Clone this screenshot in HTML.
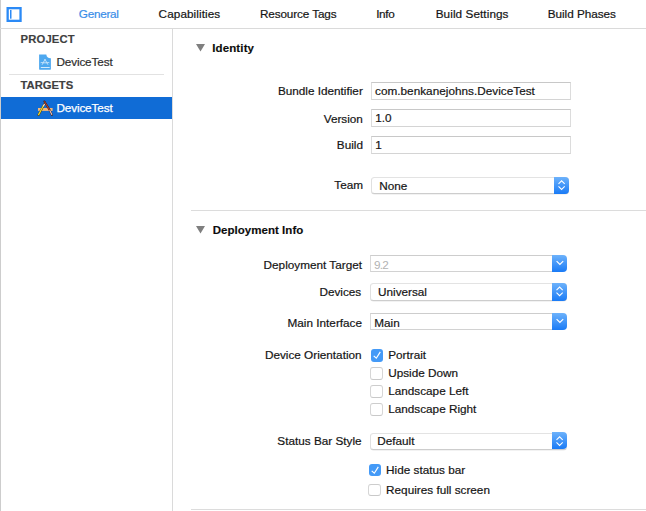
<!DOCTYPE html>
<html><head><meta charset="utf-8"><style>
html,body{margin:0;padding:0;width:646px;height:511px;overflow:hidden;background:#fff;position:relative;font-family:"Liberation Sans",sans-serif;}
.t{position:absolute;font-size:11.75px;line-height:16px;white-space:nowrap;-webkit-text-stroke:0.2px currentColor;}
</style></head><body>
<div style="position:absolute;left:0px;top:0px;width:1px;height:511px;background:#cdcdcd"></div>
<div style="position:absolute;left:0px;top:28px;width:646px;height:1px;background:#dadada"></div>
<div style="position:absolute;left:172px;top:28px;width:1px;height:483px;background:#dadada"></div>
<svg style="position:absolute;left:0;top:0" width="28" height="28" viewBox="0 0 28 28"><rect x="7.65" y="8.15" width="12.9" height="12.7" fill="none" stroke="#2b8af6" stroke-width="2.3"/><rect x="10" y="10" width="1.5" height="8.7" fill="#2b8af6"/></svg>
<div class="t" style="left:78.80px;top:6.33px;color:#3a8ee8;letter-spacing:-0.283px;">General</div>
<div class="t" style="left:158.60px;top:6.33px;color:#151515;letter-spacing:0.078px;">Capabilities</div>
<div class="t" style="left:259.90px;top:6.33px;color:#151515;letter-spacing:-0.122px;">Resource Tags</div>
<div class="t" style="left:376.20px;top:6.33px;color:#151515;letter-spacing:-0.333px;">Info</div>
<div class="t" style="left:435.70px;top:6.33px;color:#151515;letter-spacing:0.073px;">Build Settings</div>
<div class="t" style="left:547.70px;top:6.33px;color:#151515;letter-spacing:-0.025px;">Build Phases</div>
<div class="t" style="left:20.60px;top:31.00px;font-size:11.25px;color:#404040;font-weight:bold;letter-spacing:0.143px;-webkit-text-stroke:0.15px currentColor;">PROJECT</div>
<div class="t" style="left:56.40px;top:53.63px;color:#2e2e2e;letter-spacing:-0.13px;">DeviceTest</div>
<div style="position:absolute;left:9px;top:73.5px;width:155px;height:1px;background:#e2e2e2"></div>
<div class="t" style="left:20.60px;top:77.20px;font-size:11.25px;color:#404040;font-weight:bold;letter-spacing:-0.053px;-webkit-text-stroke:0.15px currentColor;">TARGETS</div>
<div style="position:absolute;left:1px;top:97.3px;width:171px;height:21.9px;background:#106cd6"></div>
<div class="t" style="left:56.40px;top:100.33px;color:#ffffff;letter-spacing:-0.13px;-webkit-text-stroke:0.25px currentColor;">DeviceTest</div>
<svg style="position:absolute;left:34px;top:50px" width="24" height="24" viewBox="0 0 24 24">
<path d="M5.1 4.5 H12.3 A4.4 4.4 0 0 0 16.9 8.3 V19.1 Q16.9 19.7 16.3 19.7 H5.7 Q5.1 19.7 5.1 19.1 Z" fill="#4ea8ef"/>
<path d="M11 9.4 L8.3 14.4 M11 9.4 L13.8 14.4 M7 12.6 Q8 12.2 9 12.8 H13 Q14 12.2 15 12.6" stroke="#cde6fb" stroke-width="0.9" fill="none" stroke-linecap="round"/>
<rect x="6.8" y="17.1" width="8.9" height="0.9" fill="#e3f2fd"/>
</svg>
<svg style="position:absolute;left:36px;top:99px" width="20" height="20" viewBox="0 0 20 20">
<rect x="2" y="9" width="14.6" height="2.9" fill="#f2b77a"/>
<path d="M2.5 15.9 L8.4 5.1" stroke="#4a3a10" stroke-width="2.1" stroke-linecap="round"/>
<path d="M2.6 15.6 L7.4 6.8" stroke="#ecd42e" stroke-width="1.3" stroke-linecap="round"/>
<path d="M7.4 6.8 L8.5 5.2" stroke="#f0e0e0" stroke-width="1.3" stroke-linecap="round"/>
<path d="M8.4 2.4 L13.9 11.4 L15.9 15.9" stroke="#3a1a10" stroke-width="1.9" stroke-linecap="round" fill="none"/>
<path d="M8.6 2.8 L13.8 11.4" stroke="#b0402a" stroke-width="1.1" stroke-linecap="round"/>
<path d="M13.9 11.6 L15.8 15.6" stroke="#ecc8c0" stroke-width="1.1" stroke-linecap="round"/>
</svg>
<svg style="position:absolute;left:196px;top:44px" width="9" height="8" viewBox="0 0 9 8"><path d="M0 0 H9 L4.5 7.5 Z" fill="#7f7f7f"/></svg>
<div class="t" style="left:212.20px;top:40.41px;font-size:11.5px;color:#0d0d0d;font-weight:bold;letter-spacing:0.13px;-webkit-text-stroke:0.15px currentColor;">Identity</div>
<div style="position:absolute;left:191px;top:210px;width:455px;height:1px;background:#dcdcdc"></div>
<svg style="position:absolute;left:196px;top:226px" width="9" height="8" viewBox="0 0 9 8"><path d="M0 0 H9 L4.5 7.5 Z" fill="#7f7f7f"/></svg>
<div class="t" style="left:212.70px;top:221.81px;font-size:11.5px;color:#0d0d0d;font-weight:bold;letter-spacing:0.036px;-webkit-text-stroke:0.15px currentColor;">Deployment Info</div>
<div style="position:absolute;left:191px;top:509px;width:455px;height:1px;background:#dcdcdc"></div>
<div class="t" style="left:277.88px;top:83.03px;color:#151515;">Bundle Identifier</div>
<div class="t" style="left:323.71px;top:110.53px;color:#151515;">Version</div>
<div class="t" style="left:336.87px;top:137.33px;color:#151515;">Build</div>
<div class="t" style="left:334.27px;top:177.43px;color:#151515;">Team</div>
<div class="t" style="left:263.59px;top:257.03px;color:#151515;">Deployment Target</div>
<div class="t" style="left:319.41px;top:284.03px;color:#151515;">Devices</div>
<div class="t" style="left:287.55px;top:314.93px;color:#151515;">Main Interface</div>
<div class="t" style="left:264.94px;top:347.33px;color:#151515;">Device Orientation</div>
<div class="t" style="left:277.35px;top:433.23px;color:#151515;">Status Bar Style</div>
<div style="position:absolute;left:371px;top:82px;width:200px;height:18px;box-sizing:border-box;background:#fff;border:1px solid #dcdcdc;border-top-color:#c8c8c8;border-bottom-color:#d4d4d4;"></div>
<div class="t" style="left:375.00px;top:83.13px;color:#151515;letter-spacing:0.02px;">com.benkanejohns.DeviceTest</div>
<div style="position:absolute;left:371px;top:109px;width:200px;height:18px;box-sizing:border-box;background:#fff;border:1px solid #dcdcdc;border-top-color:#c8c8c8;border-bottom-color:#d4d4d4;"></div>
<div class="t" style="left:375.20px;top:110.33px;color:#151515;">1.0</div>
<div style="position:absolute;left:371px;top:136px;width:200px;height:18px;box-sizing:border-box;background:#fff;border:1px solid #dcdcdc;border-top-color:#c8c8c8;border-bottom-color:#d4d4d4;"></div>
<div class="t" style="left:375.20px;top:137.33px;color:#151515;">1</div>
<div style="position:absolute;left:371px;top:177.2px;width:198.4px;height:17px;box-sizing:border-box;background:#fff;border:1px solid #e0e0e0;border-top-color:#e3e3e3;border-bottom-color:#cdcdcd;border-radius:3.5px;box-shadow:0 0.5px 0.6px rgba(0,0,0,0.10);"></div>
<div style="position:absolute;left:554.3px;top:176.79999999999998px;width:15.1px;height:17.2px;background:linear-gradient(#6db2fb,#1a7bf6);border-radius:0 4px 4px 0;"></div>
<svg style="position:absolute;left:554.3px;top:177.2px;overflow:visible" width="15" height="17" viewBox="0 0 15 17"><path d="M4.5 6.80 L7.6 3.80 L10.7 6.80 M4.5 9.40 L7.6 12.40 L10.7 9.40" stroke="#fff" stroke-width="1.05" fill="none"/></svg>
<div class="t" style="left:379.30px;top:177.73px;color:#151515;">None</div>
<div style="position:absolute;left:370.3px;top:255.2px;width:185px;height:16.5px;box-sizing:border-box;background:#fff;border:1px solid #dadada;border-right:none;border-top-color:#cdcdcd;border-bottom-color:#d2d2d2;"></div>
<div style="position:absolute;left:551.5999999999999px;top:255.2px;width:15.7px;height:16.5px;background:linear-gradient(#6db2fb,#1a7bf6);border-radius:0 4px 4px 0;"></div>
<svg style="position:absolute;left:551.5999999999999px;top:255.2px;overflow:visible" width="16" height="16.5" viewBox="0 0 16 16.5"><path d="M4.6 6.05 L7.9 9.45 L11.2 6.05" stroke="#fff" stroke-width="1.2" fill="none"/></svg>
<div class="t" style="left:373.90px;top:256.83px;color:#b3b3b3;letter-spacing:-0.665px;-webkit-text-stroke:0px currentColor;">9.2</div>
<div style="position:absolute;left:370.2px;top:283.3px;width:196.8px;height:17.5px;box-sizing:border-box;background:#fff;border:1px solid #e0e0e0;border-top-color:#e3e3e3;border-bottom-color:#cdcdcd;border-radius:3.5px;box-shadow:0 0.5px 0.6px rgba(0,0,0,0.10);"></div>
<div style="position:absolute;left:551.9px;top:282.90000000000003px;width:15.1px;height:17.7px;background:linear-gradient(#6db2fb,#1a7bf6);border-radius:0 4px 4px 0;"></div>
<svg style="position:absolute;left:551.9px;top:283.3px;overflow:visible" width="15" height="17.5" viewBox="0 0 15 17.5"><path d="M4.5 7.05 L7.6 4.05 L10.7 7.05 M4.5 9.65 L7.6 12.65 L10.7 9.65" stroke="#fff" stroke-width="1.05" fill="none"/></svg>
<div class="t" style="left:378.00px;top:283.93px;color:#151515;">Universal</div>
<div style="position:absolute;left:370.3px;top:313.3px;width:185px;height:16.5px;box-sizing:border-box;background:#fff;border:1px solid #dadada;border-right:none;border-top-color:#cdcdcd;border-bottom-color:#d2d2d2;"></div>
<div style="position:absolute;left:551.5999999999999px;top:313.3px;width:15.7px;height:16.5px;background:linear-gradient(#6db2fb,#1a7bf6);border-radius:0 4px 4px 0;"></div>
<svg style="position:absolute;left:551.5999999999999px;top:313.3px;overflow:visible" width="16" height="16.5" viewBox="0 0 16 16.5"><path d="M4.6 6.05 L7.9 9.45 L11.2 6.05" stroke="#fff" stroke-width="1.2" fill="none"/></svg>
<div class="t" style="left:374.30px;top:314.83px;color:#151515;">Main</div>
<div style="position:absolute;left:369.6px;top:432.6px;width:197.7px;height:17px;box-sizing:border-box;background:#fff;border:1px solid #e0e0e0;border-top-color:#e3e3e3;border-bottom-color:#cdcdcd;border-radius:3.5px;box-shadow:0 0.5px 0.6px rgba(0,0,0,0.10);"></div>
<div style="position:absolute;left:552.1999999999999px;top:432.20000000000005px;width:15.1px;height:17.2px;background:linear-gradient(#6db2fb,#1a7bf6);border-radius:0 4px 4px 0;"></div>
<svg style="position:absolute;left:552.1999999999999px;top:432.6px;overflow:visible" width="15" height="17" viewBox="0 0 15 17"><path d="M4.5 6.80 L7.6 3.80 L10.7 6.80 M4.5 9.40 L7.6 12.40 L10.7 9.40" stroke="#fff" stroke-width="1.05" fill="none"/></svg>
<div class="t" style="left:377.20px;top:433.23px;color:#151515;">Default</div>
<div style="position:absolute;left:370.5px;top:349.4px;width:12.5px;height:12.5px;box-sizing:border-box;background:#449af7;border-radius:3px;"></div>
<svg style="position:absolute;left:370.5px;top:349.4px" width="13" height="13" viewBox="0 0 13 13"><path d="M2.7 6.9 L5.3 9.2 L9.3 2.9" stroke="#fff" stroke-width="1.2" fill="none"/></svg>
<div class="t" style="left:388.20px;top:346.83px;color:#151515;">Portrait</div>
<div style="position:absolute;left:370.2px;top:367.4px;width:12.7px;height:12.5px;box-sizing:border-box;background:#fff;border:1px solid #d6d6d6;border-top-color:#cdcdcd;border-bottom-color:#c9c9c9;border-radius:3px;"></div>
<div class="t" style="left:388.20px;top:364.93px;color:#151515;">Upside Down</div>
<div style="position:absolute;left:370.2px;top:385.4px;width:12.7px;height:12.5px;box-sizing:border-box;background:#fff;border:1px solid #d6d6d6;border-top-color:#cdcdcd;border-bottom-color:#c9c9c9;border-radius:3px;"></div>
<div class="t" style="left:388.20px;top:382.93px;color:#151515;">Landscape Left</div>
<div style="position:absolute;left:370.2px;top:403.4px;width:12.7px;height:12.5px;box-sizing:border-box;background:#fff;border:1px solid #d6d6d6;border-top-color:#cdcdcd;border-bottom-color:#c9c9c9;border-radius:3px;"></div>
<div class="t" style="left:388.20px;top:400.93px;color:#151515;">Landscape Right</div>
<div style="position:absolute;left:368.7px;top:463.6px;width:12.5px;height:12.5px;box-sizing:border-box;background:#449af7;border-radius:3px;"></div>
<svg style="position:absolute;left:368.7px;top:463.6px" width="13" height="13" viewBox="0 0 13 13"><path d="M2.7 6.9 L5.3 9.2 L9.3 2.9" stroke="#fff" stroke-width="1.2" fill="none"/></svg>
<div class="t" style="left:386.10px;top:461.73px;color:#151515;">Hide status bar</div>
<div style="position:absolute;left:368.4px;top:483.5px;width:12.7px;height:12.5px;box-sizing:border-box;background:#fff;border:1px solid #d6d6d6;border-top-color:#cdcdcd;border-bottom-color:#c9c9c9;border-radius:3px;"></div>
<div class="t" style="left:386.10px;top:481.63px;color:#151515;">Requires full screen</div>
</body></html>
